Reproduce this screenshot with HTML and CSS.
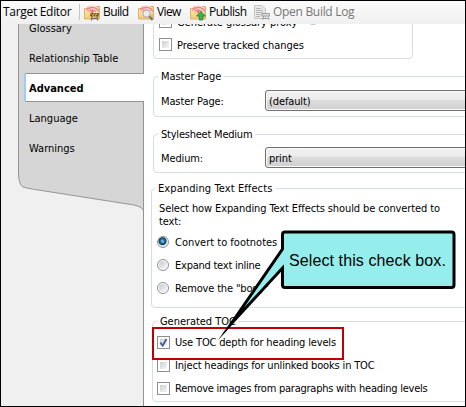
FILE: index.html
```html
<!DOCTYPE html>
<html lang="en">
<head>
<meta charset="utf-8">
<title>Target Editor</title>
<link rel="stylesheet" href="styles.css">
</head>
<body>
<svg class="defs" width="0" height="0">
  <defs>
    <linearGradient id="folder" x1="0" y1="0" x2="1" y2="1"><stop offset="0" stop-color="#fff0b8"/><stop offset="1" stop-color="#e9b552"/></linearGradient>
    <g id="target">
      <path d="M.5 15V4.500H3L4 2.500H15.500V15Z" fill="url(#folder)" stroke="#dcb06a"/>
      <path d="M2.500 7A6 6 0 0 1 14.500 7V9.500H11L8 8L2.500 8Z" fill="#ffe1dc"/>
      <path d="M2.500 6.500A6.500 5.500 0 0 1 14.500 7.500M4.500 7.500A4.300 3.500 0 0 1 12 8" fill="none" stroke="#f07f80" stroke-width="1.400"/>
      <circle cx="8.300" cy="7.800" r="1.300" fill="#e86668"/>
    </g>
  </defs>
</svg>
<div class="window">
  <header class="toolbar">
    <span class="title">Target Editor</span>
    <i class="divider"></i>
    <span class="tool build"><svg width="16" height="17" viewBox="0 0 16 17"><use href="#target"/><path d="M6.500 9.500H14.500V12H6.500Z" fill="#f7c52d" stroke="#75622c" stroke-width=".7"/><path d="M8.500 9.500L7 12M11.300 9.500L9.800 12M14 9.500L12.500 12" stroke="#333"/><path d="M8 12L7.500 16.500M13 12L13.500 16.500M7.500 14.500H13" stroke="#666" fill="none"/></svg><b>Build</b></span>
    <span class="tool view"><svg width="16" height="17" viewBox="0 0 16 17"><use href="#target"/><path d="M11 12L14.500 16" stroke="#777" stroke-width="2"/><circle cx="8.500" cy="9.500" r="3.600" fill="#e9f0f5" fill-opacity=".9" stroke="#a9aeb3"/></svg><b>View</b></span>
    <span class="tool publish"><svg width="16" height="17" viewBox="0 0 16 17"><use href="#target"/><path d="M11 7.500L15.300 12H12.700V16H9.300V12H6.700Z" fill="#35b84b" stroke="#168333" stroke-width=".8"/></svg><b>Publish</b></span>
    <span class="tool log"><svg width="16" height="17" viewBox="0 0 16 17"><path d="M.5 1.500H8L11.500 5V14.500H.5Z" fill="#e8e8e8" stroke="#c5c5c5"/><path d="M2 4.500H7M2 6.500H9M2 8.500H9M2 10.500H7M2 12.500H6" stroke="#b5b5b5"/><path d="M8 9.500H15.500V12H8ZM9.500 12L8.500 16M14 12L15 16M9 14.500H14" fill="#ddd" stroke="#999" stroke-width=".9"/></svg><b>Open Build Log</b></span>
  </header>
  <div class="body">
    <nav class="sidebar">
      <svg class="shape" width="128" height="382" viewBox="0 0 128 382"><path d="M.5 0V150Q1 161 5 163Q8 164 14 165L116 181Q125 183 125.500 187V0Z" fill="#d6d6d6"/><path d="M.5 0V150Q1 161 5 163Q8 164 14 165L116 181Q125 183 125.500 187" fill="none" stroke="#949494"/><path d="M125.500 0V382" stroke="#949494"/></svg>
      <a class="item">Glossary</a>
      <a class="item">Relationship Table</a>
      <a class="item active">Advanced</a>
      <a class="item">Language</a>
      <a class="item">Warnings</a>
    </nav>
    <main class="content">
      <section class="group general">
        <label class="option"><i class="check"></i><span>Generate glossary proxy</span><i class="help"></i></label>
        <label class="option"><i class="check"></i><span>Preserve tracked changes</span></label>
      </section>
      <section class="group master">
        <h2><span>Master Page</span></h2>
        <div class="field"><span>Master Page:</span><div class="select">(default)</div></div>
      </section>
      <section class="group medium">
        <h2><span class="tight">Stylesheet Medium</span></h2>
        <div class="field"><span>Medium:</span><div class="select">print</div></div>
      </section>
      <section class="group effects">
        <h2><span class="wide">Expanding Text Effects</span></h2>
        <p>Select how Expanding Text Effects should be converted to<br>text:</p>
        <label class="option"><i class="radio on"></i><span class="wide">Convert to footnotes</span></label>
        <label class="option"><i class="radio"></i><span class="tight">Expand text inline</span></label>
        <label class="option"><i class="radio"></i><span>Remove the "body"</span></label>
      </section>
      <section class="group toc">
        <h2><span>Generated TOC</span></h2>
        <label class="option"><i class="check"><svg width="11" height="11" viewBox="0 0 11 11"><path d="M2.200 5.500L4.700 8.500L8.500 2" fill="none" stroke="#4660a5" stroke-width="1.900"/></svg></i><span>Use TOC depth for heading levels</span></label>
        <label class="option"><i class="check"></i><span>Inject headings for unlinked books in TOC</span></label>
        <label class="option"><i class="check"></i><span class="tight">Remove images from paragraphs with heading levels</span></label>
      </section>
    </main>
  </div>
  <div class="highlight"></div>
  <div class="callout">
    <svg width="242" height="116" viewBox="216 228 242 116"><path d="M285 232H451.500Q454 232 454 234.500V285Q454 287.500 451.500 287.500H285Q282.500 287.500 282.500 285V268L231 324L282.500 249V234.500Q282.500 232 285 232Z" fill="#95eeec" stroke="#000" stroke-width="3" stroke-miterlimit="30"/></svg>
    <span>Select this check box.</span>
  </div>
</div>
</body>
</html>
```
FILE: styles.css
```css
* { box-sizing: border-box; }
body { margin: 0; font: 11px/14px "DejaVu Sans Condensed", "DejaVu Sans", sans-serif; font-stretch: condensed; color: #000; }
.defs { position: absolute; }
.window { position: relative; width: 466px; height: 407px; border: 1px solid #000; background: #fff; overflow: hidden; display: flex; flex-direction: column; }
.toolbar { flex: none; height: 23px; display: flex; align-items: center; padding: 0 0 2px 2px; background: linear-gradient(#fbfbfb, #f0f0f0); font: 12px/18px "Open Sans", sans-serif; letter-spacing: -.3px; white-space: nowrap; }
.toolbar b { font-weight: 400; }
.title { width: 76px; }
.divider { width: 1px; height: 16px; background: #c5c5c5; margin-right: 4px; }
.tool { display: flex; align-items: center; gap: 3px; flex: none; }
.tool svg { flex: none; margin-top: 1px; }
.build { width: 54px; letter-spacing: -.6px; }
.view { width: 52px; letter-spacing: -.6px; }
.publish { width: 64px; letter-spacing: -.5px; }
.log { color: #777; }
.body { flex: 1; display: flex; min-height: 0; }
.sidebar { position: relative; width: 143px; background: #f0f0f0; flex: none; overflow: hidden; }
.shape { position: absolute; left: 17px; top: 0; }
.item { position: relative; display: flex; align-items: center; height: 30px; padding: 2px 0 0 28px; white-space: nowrap; }
.item:nth-of-type(1) { margin-top: -11px; }
.item.active { height: 29px; margin: 0 0 1px 23px; padding-left: 3px; border: 1px solid #949494; border-left: 2px solid #99ccff; border-right: 0; background: #fff; font-weight: 700; border-radius: 2px 0 0 2px; }
.content { flex: 1; min-width: 0; padding-left: 9px; overflow: hidden; white-space: nowrap; }
.group { border: 1px solid #d3dde7; border-radius: 4px; width: 340px; }
.group h2 { margin: -7px 0 0 4px; height: 14px; font: inherit; letter-spacing: -.05px; }
.group h2 span { display: inline-block; background: #fff; padding: 0 3px; }
.group h2 .tight { letter-spacing: -.22px; }
.group h2 .wide { letter-spacing: .1px; }
.general { margin-top: -20px; height: 55px; width: 260px; padding: 5px 0 0 5px; }
.option { display: flex; align-items: center; height: 23.150px; gap: 5px; letter-spacing: -.16px; }
.option span { padding-top: 2px; }
.option .tight { letter-spacing: -.24px; }
.option .wide { letter-spacing: 0; }
.general .option { letter-spacing: -.05px; }
.check { width: 13px; height: 13px; border: 1px solid #8d8f92; background: linear-gradient(135deg, #cbcfd5, #f6f6f6) content-box #f4f4f4; padding: 2px; flex: none; display: flex; }
.check svg { margin: -2px; flex: none; }
.radio { width: 12px; height: 12px; margin-right: 1px; border: 1px solid #8d8f92; border-radius: 50%; background: linear-gradient(135deg, #c5c9ce, #fafafa) content-box #f4f4f4; padding: 1px; flex: none; }
.radio.on { background: radial-gradient(circle at 45% 42%, #82d5f5 0, #1c6d9c 28%, #0c3956 44%, #e9edf0 56%); }
.help { width: 12px; height: 12px; margin: -6px 0 0 5px; border-radius: 50%; background: #9bcaf5; }
.master { margin-top: 17px; height: 41px; }
.medium { margin-top: 17px; height: 39px; }
.field { display: flex; align-items: center; margin: 6px 0 0 7px; height: 21px; letter-spacing: -.12px; }
.medium .field { margin-top: 5px; }
.field > span { width: 104px; padding-top: 2px; }
.select { flex: 1; height: 21px; border: 1px solid #707070; border-radius: 3px; box-shadow: inset 0 0 0 1px #fafafa; background: linear-gradient(#f2f2f2, #ebebeb 49%, #dddddd 50%, #cfcfcf); padding: 4px 0 0 3px; }
.effects { margin: 15px 0 0 -2px; height: 120px; }
.effects h2 { margin-left: 3px; }
.effects p { margin: 6px 0 2px 7px; line-height: 13px; letter-spacing: -.11px; }
.effects .option { padding-left: 5px; }
.effects .option span { padding-top: 2px; }
.toc { margin: 13px 0 0 -1px; height: 81px; }
.toc .option { padding-left: 4px; }
.toc h2 { margin-bottom: 2px; }
.toc .option span { padding-top: 1px; }
.highlight { position: absolute; left: 151px; top: 326px; width: 192px; height: 33px; border: 2px solid #c00000; }
.callout { position: absolute; left: 215px; top: 227px; width: 242px; height: 116px; }
.callout svg { display: block; }
.callout span { position: absolute; left: 73px; top: 23px; font: 16px/20px "Liberation Sans", sans-serif; letter-spacing: .1px; white-space: nowrap; }
```
